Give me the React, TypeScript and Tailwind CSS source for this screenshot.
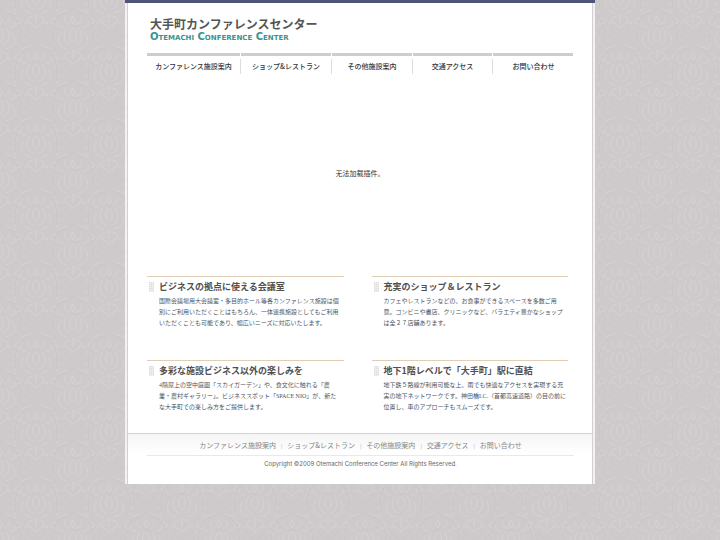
import React from "react";

const navItems = ["カンファレンス施設案内", "ショップ&レストラン", "その他施設案内", "交通アクセス", "お問い合わせ"];

const sections = [
  {
    title: "ビジネスの拠点に使える会議室",
    lines: [
      "国際会議場用大会議室・多目的ホール等各カンファレンス施設は個",
      "別にご利用いただくことはもちろん、一体連携施設としてもご利用",
      "いただくことも可能であり、幅広いニーズに対応いたします。",
    ],
  },
  {
    title: "充実のショップ＆レストラン",
    lines: [
      "カフェやレストランなどの、お食事ができるスペースを多数ご用",
      "意。コンビニや書店、クリニックなど、バラエティ豊かなショップ",
      "は全２７店舗あります。",
    ],
  },
  {
    title: "多彩な施設ビジネス以外の楽しみを",
    lines: [
      "4階屋上の空中庭園「スカイガーデン」や、食文化に触れる「農",
      "業・農村ギャラリー」。ビジネススポット「SPACE NIO」が、新た",
      "な大手町での楽しみ方をご提供します。",
    ],
  },
  {
    title: "地下1階レベルで「大手町」駅に直結",
    lines: [
      "地下鉄５路線が利用可能な上、雨でも快適なアクセスを実現する充",
      "実の地下ネットワークです。神田橋I.C.（首都高速道路）の目の前に",
      "位置し、車のアプローチもスムーズです。",
    ],
  },
];

// damask wallpaper behind the page
function Wallpaper() {
  return (
    <svg className="absolute inset-0 h-full w-full" aria-hidden="true">
      <defs>
        <g id="motif" fill="none" stroke="#d9d6d6" strokeWidth="1">
          <path d="M0 -7C4 -5 5 3 0 7C-5 3 -4 -5 0 -7Z" />
          <path d="M-3 10C-10 8 -10 -2 -6 -7M3 10C10 8 10 -2 6 -7M-5 14C-15 13 -17 4 -12 -2M5 14C15 13 17 4 12 -2" />
          <path d="M0 -11C-3 -14 -2 -16 0 -19C2 -16 3 -14 0 -11ZM-4 -11C-9 -12 -9 -15 -8 -18M4 -11C9 -12 9 -15 8 -18M-10 -8C-15 -8 -17 -11 -15 -14M10 -8C15 -8 17 -11 15 -14" />
          <path d="M0 14V24M-2 17C-8 17 -10 22 -6 23M2 17C8 17 10 22 6 23M-12 24C-7 22 -4 26 0 29C4 26 7 22 12 24" />
          <path d="M-24 -6C-20 -10 -17 -4 -21 -2M24 -6C20 -10 17 -4 21 -2M-24 5C-19 4 -18 10 -22 12M24 5C19 4 18 10 22 12M-20 19C-14 18 -14 26 -19 25M20 19C14 18 14 26 19 25M-16 -21C-11 -25 -6 -23 -5 -26M16 -21C11 -25 6 -23 5 -26" />
          <path stroke="#c6c1c2" d="M-20 10C-22 -4 -20 -14 -12 -20C-6 -23 -3 -23 0 -27C3 -23 6 -23 12 -20C20 -14 22 -4 20 10M-9 29C-8 33 -3 34 0 38M9 29C8 33 3 34 0 38M-26 0L-23 3M26 0L23 3M-4 -9H4" />
        </g>
        <pattern id="damask" width="73" height="72" patternUnits="userSpaceOnUse">
          <rect width="73" height="72" fill="#cecacb" />
          <g opacity="0.6">
            <use href="#motif" x="0" y="35" />
            <use href="#motif" x="73" y="35" />
            <use href="#motif" x="36" y="-1" />
            <use href="#motif" x="36" y="71" />
          </g>
        </pattern>
      </defs>
      <rect width="100%" height="100%" fill="url(#damask)" />
    </svg>
  );
}

function HeadingMark() {
  return (
    <svg className="h-[10px] w-[5px] shrink-0" viewBox="0 0 5 10" aria-hidden="true">
      <rect width="5" height="10" fill="#efecec" />
      <path d="M0.5 0V10M2.5 0V10M4.5 0V10" stroke="#dfdada" strokeWidth="1" strokeDasharray="1 1" />
    </svg>
  );
}

function App() {
  return (
    <div className="relative min-h-screen bg-[#cecacb] font-['Liberation_Sans','Noto_Sans_CJK_JP',sans-serif]">
      <Wallpaper />
      <div className="relative mx-auto max-w-[470px]">
        <div className="h-[3px] bg-[#4b5678]" />
        <div className="border-x-2 border-[#f3f1f2] bg-white">
          <div className="border-x border-[#d3d0d4]">
            <header className="pt-[13px] pr-[18px] pl-[19px]">
              <div className="pb-3 pl-[3px]">
                <h1 className="font-['Noto_Sans_CJK_JP',sans-serif] text-[12px] leading-[16px] font-bold text-[#555]">
                  大手町カンファレンスセンター
                </h1>
                <p className="font-['DejaVu_Sans',sans-serif] text-[10px] leading-[9px] font-bold text-[#3a938f] [font-variant-caps:small-caps]">
                  Otemachi Conference Center
                </p>
              </div>
              <nav>
                <ul className="grid grid-cols-[94fr_91fr_81fr_80fr_81fr]">
                  {navItems.map((item) => (
                    <li key={item} className="group">
                      <div className="mr-px h-[3px] bg-[#d0cccd]" />
                      <a
                        href="#"
                        className="mt-[3px] block border-r border-[#dcdcdc] text-center font-['Noto_Sans_CJK_JP',sans-serif] text-[7px] leading-[15px] font-medium whitespace-nowrap text-[#333] group-last:border-r-0"
                      >
                        {item}
                      </a>
                    </li>
                  ))}
                </ul>
              </nav>
            </header>

            <main>
              <p className="pt-[93px] pb-[97px] text-center font-['Noto_Sans_CJK_SC',sans-serif] text-[7px] leading-[12px] text-[#333]">
                无法加载插件。
              </p>
              <div className="grid grid-cols-2 gap-x-7 gap-y-[31px] pr-6 pb-[20px] pl-[19px]">
                {sections.map((section) => (
                  <section key={section.title} className="border-t border-[#e0cfb6] pt-1 pl-[2px]">
                    <div className="flex items-center gap-[5px]">
                      <HeadingMark />
                      <h2 className="font-['Noto_Sans_CJK_JP',sans-serif] text-[9px] leading-[11px] font-bold whitespace-nowrap text-[#505050]">
                        {section.title}
                      </h2>
                    </div>
                    <p className="mt-1 pl-[10px] font-['Liberation_Serif','Noto_Sans_CJK_JP',serif] text-[6px] leading-[11px] whitespace-nowrap text-[#4c5561]">
                      {section.lines.map((line) => (
                        <span key={line} className="block">
                          {line}
                        </span>
                      ))}
                    </p>
                  </section>
                ))}
              </div>
            </main>

            <footer className="border-t border-[#d4d4d4] bg-linear-to-b from-[#f5f5f5] to-white to-40% pt-[6px] pr-[18px] pb-[16px] pl-[19px] text-[#888]">
              <ul className="flex justify-center pb-1 font-['Noto_Sans_CJK_JP',sans-serif] text-[7px] leading-[11px]">
                {navItems.map((item, i) => (
                  <li key={item} className="flex whitespace-nowrap">
                    {i > 0 && <span className="px-[5px] text-[5px] text-[#aaa]">|</span>}
                    <a href="#">{item}</a>
                  </li>
                ))}
              </ul>
              <p className="border-t border-[#e9e9e9] pt-1 text-center font-['Inter',sans-serif] text-[6px] leading-[8px] text-[#666]">
                Copyright ©2009 Otemachi Conference Center All Rights Reserved.
              </p>
            </footer>
          </div>
        </div>
      </div>
    </div>
  );
}

export default App;
